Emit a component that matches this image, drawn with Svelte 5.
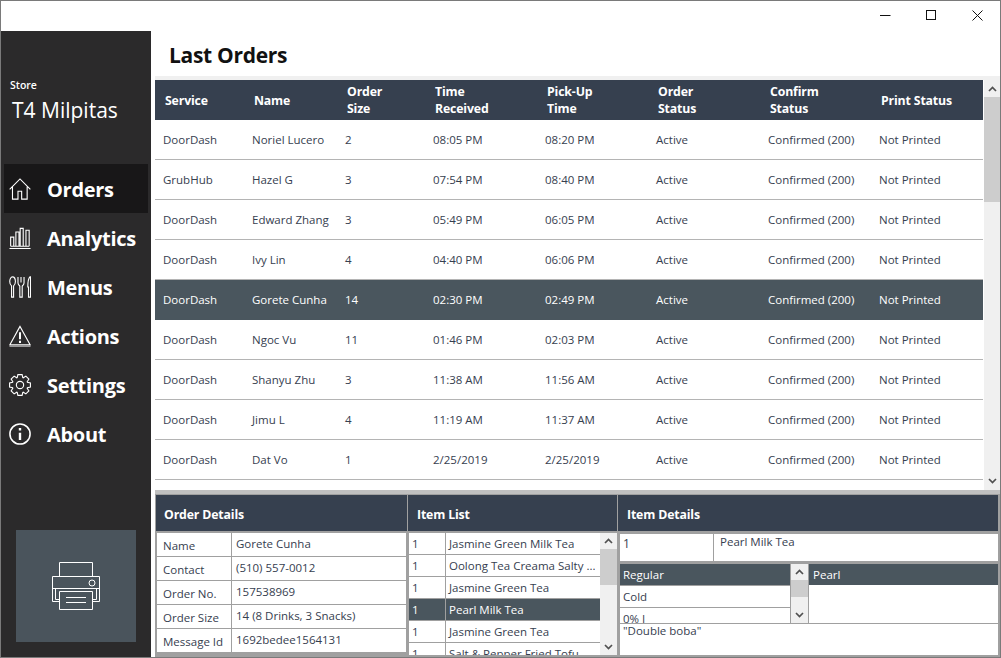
<script lang="ts">
	const columns = ['Service', 'Name', 'Order Size', 'Time Received', 'Pick-Up Time', 'Order Status', 'Confirm Status', 'Print Status'];

	const orders = [
		['DoorDash', 'Noriel Lucero', '2', '08:05 PM', '08:20 PM'],
		['GrubHub', 'Hazel G', '3', '07:54 PM', '08:40 PM'],
		['DoorDash', 'Edward Zhang', '3', '05:49 PM', '06:05 PM'],
		['DoorDash', 'Ivy Lin', '4', '04:40 PM', '06:06 PM'],
		['DoorDash', 'Gorete Cunha', '14', '02:30 PM', '02:49 PM'],
		['DoorDash', 'Ngoc Vu', '11', '01:46 PM', '02:03 PM'],
		['DoorDash', 'Shanyu Zhu', '3', '11:38 AM', '11:56 AM'],
		['DoorDash', 'Jimu L', '4', '11:19 AM', '11:37 AM'],
		['DoorDash', 'Dat Vo', '1', '2/25/2019', '2/25/2019']
	];
	const selectedOrder = 4;

	const nav = ['Orders', 'Analytics', 'Menus', 'Actions', 'Settings', 'About'];

	const details = [
		['Name', 'Gorete Cunha'],
		['Contact', '(510) 557-0012'],
		['Order No.', '157538969'],
		['Order Size', '14 (8 Drinks, 3 Snacks)'],
		['Message Id', '1692bedee1564131']
	];

	const items = ['Jasmine Green Milk Tea', 'Oolong Tea Creama Salty ...', 'Jasmine Green Tea', 'Pearl Milk Tea', 'Jasmine Green Tea', 'Salt & Pepper Fried Tofu'];
	const selectedItem = 3;

	// 8 tooth gear outline for the settings icon
	function gearPath() {
		const pts: string[] = [];
		for (let i = 0; i < 8; i++) {
			const a = (i * Math.PI) / 4;
			for (const [off, r] of [[-0.36, 8.6], [-0.2, 11.6], [0.2, 11.6], [0.36, 8.6]]) {
				pts.push(`${(12 + r * Math.sin(a + off)).toFixed(2)} ${(12 - r * Math.cos(a + off)).toFixed(2)}`);
			}
		}
		return 'M' + pts.join('L') + 'Z';
	}
</script>

{#snippet chevron(up: boolean)}
	<svg class="chev" width="9" height="6" viewBox="0 0 9 6">
		<path d={up ? 'M1 5l3.5-3.5L8 5' : 'M1 1l3.5 3.5L8 1'} fill="none" stroke="#505050" stroke-width="1.7" />
	</svg>
{/snippet}

<div class="window">
	<header class="titlebar">
		<svg width="11" height="11" viewBox="0 0 11 11" class="cap min"><path d="M0 5.5h10.5" stroke="#111" fill="none" /></svg>
		<svg width="11" height="11" viewBox="0 0 11 11" class="cap"><rect x="0.5" y="0.5" width="9" height="9" stroke="#111" fill="none" /></svg>
		<svg width="11" height="11" viewBox="0 0 11 11" class="cap"><path d="M0.5 0.5l10 10M10.5 0.5l-10 10" stroke="#111" fill="none" /></svg>
	</header>

	<div class="body">
		<aside class="sidebar">
			<div class="store-label">Store</div>
			<div class="store-name">T4 Milpitas</div>

			<nav>
				{#each nav as name, i}
					<div class="nav-item" class:active={i === 0}>
						<svg class="nav-icon" width="24" height="24" viewBox="0 0 24 24" fill="none" stroke="#fff" stroke-width="1.2">
							{#if name === 'Orders'}
								<path d="M0.7 12.500L12 1l11.300 11.500M3.800 9.500v13.500h6v-8.500h4v8.500h6V9.500" />
							{:else if name === 'Analytics'}
								<path d="M1.800 21V11h3.400v10M7.500 21V5.500h3.400V21M12.200 21V1.500h3.300V21M18.500 21V3.500h3.500V21M1.800 21h20.200" />
								<path d="M0.500 23.500h23" stroke-width="1.300" />
							{:else if name === 'Menus'}
								<path d="M3.800 1c-2 0-3 2.700-3 5s1 4 2 4.800v12.200h2.200V10.800c1-.8 2-2.500 2-4.800s-1-5-3.200-5z" />
								<path d="M9.800 1v6.500c0 1.800 1.200 2.800 2 3.500v12h2.600V11c.8-.7 2-1.700 2-3.500V1M13.100 1v6" />
								<path d="M23 .8c-1.700 1.500-2.500 5-2.500 11.200h.8v11H23.500V.8z" />
							{:else if name === 'Actions'}
								<path d="M12 1.500L1 21.500h22z" />
								<path d="M0.500 23h23" stroke="#bbb" stroke-width="1.500" />
								<path d="M12 8v7.500M12 17.300v2.200" stroke-width="2.200" />
							{:else if name === 'Settings'}
								<path d={gearPath()} />
								<circle cx="12" cy="12" r="4" />
							{:else}
								<circle cx="12" cy="12" r="11" stroke-width="1.700" />
								<path d="M12 5.500v2.800M12 10.500v8" stroke-width="2.600" />
							{/if}
						</svg>
						<span>{name}</span>
					</div>
				{/each}
			</nav>

			<button class="print" aria-label="Print">
				<svg width="48" height="48" viewBox="0 0 48 48" fill="none" stroke="#fff" stroke-width="1">
					<path d="M7.500 14.500V.5h33v14" />
					<path d="M7.500 39.500H.5v-25h47v25h-7" />
					<path d="M.5 26.500h47" />
					<circle cx="40" cy="21" r="3" />
					<path d="M3.500 27v10.500h4M44.500 27v10.500h-4" />
					<path d="M7.500 29.500h33v18h-33z" />
					<path d="M14 35.500h20M14 40.500h20" />
				</svg>
			</button>
		</aside>

		<main class="main">
			<h1>Last Orders</h1>

			<section class="orders">
				<div class="table">
					<div class="row head">
						{#each columns as col}
							<div class="cell">{col}</div>
						{/each}
					</div>
					{#each orders as order, i}
						<div class="row" class:selected={i === selectedOrder}>
							{#each order as value}
								<div class="cell">{value}</div>
							{/each}
							<div class="cell">Active</div>
							<div class="cell">Confirmed (200)</div>
							<div class="cell">Not Printed</div>
						</div>
					{/each}
				</div>
				<div class="scrollbar">
					{@render chevron(true)}
					<div class="track"><div class="thumb"></div></div>
					{@render chevron(false)}
				</div>
			</section>

			<section class="panels">
				<div class="panel">
					<h2 class="first">Order Details</h2>
					<div class="details">
						{#each details as [label, value]}
							<div class="label">{label}</div>
							<div class="value">{value}</div>
						{/each}
					</div>
				</div>

				<div class="panel">
					<h2>Item List</h2>
					<div class="item-wrap">
						<div class="items">
							{#each items as item, i}
								<div class="item" class:selected={i === selectedItem}>
									<div class="qty">1</div>
									<div class="item-name">{item}</div>
								</div>
							{/each}
						</div>
						<div class="scrollbar small">
							{@render chevron(true)}
							<div class="track"><div class="thumb"></div></div>
							{@render chevron(false)}
						</div>
					</div>
				</div>

				<div class="panel last">
					<h2>Item Details</h2>
					<div class="item-detail">
						<div class="detail-top">
							<div class="detail-qty">1</div>
							<div class="detail-name">Pearl Milk Tea</div>
						</div>
						<div class="options">
							<div class="opt-list">
								<div class="opt selected">Regular</div>
								<div class="opt">Cold</div>
								<div class="opt">0% I</div>
							</div>
							<div class="scrollbar tiny">
								{@render chevron(true)}
								<div class="track"><div class="thumb"></div></div>
								{@render chevron(false)}
							</div>
							<div class="toppings">
								<div class="opt selected">Pearl</div>
							</div>
						</div>
						<div class="note">"Double boba"</div>
					</div>
				</div>
			</section>
		</main>
	</div>
</div>

<style>
	:global(body) {
		margin: 0;
	}

	.window {
		width: 1001px;
		height: 658px;
		box-sizing: border-box;
		border: 1px solid #7a7a7a;
		background: #fff;
		display: flex;
		flex-direction: column;
		overflow: hidden;
		font-family: 'Open Sans', 'Noto Sans', sans-serif;
		font-size: 11.5px;
		color: #36404f;
	}

	.titlebar {
		height: 30px;
		flex: none;
		display: flex;
		justify-content: flex-end;
		align-items: flex-start;
		gap: 35px;
		padding: 9px 17px 0 0;
		box-sizing: border-box;
	}

	.cap {
		display: block;
	}

	.body {
		flex: 1;
		display: flex;
		min-height: 0;
	}

	.sidebar {
		width: 150px;
		flex: none;
		background: #2b2a2b;
		color: #fff;
		display: flex;
		flex-direction: column;
		box-sizing: border-box;
		padding-top: 47px;
	}

	.store-label {
		font-size: 10.5px;
		font-weight: 600;
		padding-left: 9px;
		line-height: 14px;
	}

	.store-name {
		font-size: 21px;
		padding-left: 11px;
		line-height: 28px;
		margin-top: 4px;
		letter-spacing: 0;
	}

	nav {
		margin-top: 40px;
		display: flex;
		flex-direction: column;
	}

	.nav-item {
		margin: 0 3px;
		height: 49px;
		display: flex;
		align-items: center;
		padding: 1px 0 0 5px;
		font-size: 20px;
		font-weight: 700;
		letter-spacing: -0.3px;
		box-sizing: border-box;
	}

	.nav-item.active {
		background: #181718;
	}

	.nav-icon {
		flex: none;
		width: 22px;
		height: 22px;
		margin-right: 16px;
	}

	.print {
		margin: auto 15px 15px;
		height: 112px;
		background: #4a545c;
		border: 0;
		padding: 0;
		display: flex;
		align-items: center;
		justify-content: center;
	}

	.main {
		flex: 1;
		min-width: 0;
		display: flex;
		flex-direction: column;
		padding-left: 4px;
	}

	h1 {
		margin: 0;
		height: 45px;
		flex: none;
		padding-left: 14px;
		font-size: 21px;
		font-weight: 700;
		line-height: 48px;
		color: #111;
		letter-spacing: -0.3px;
		border-bottom: 4px solid #f0f0f0;
	}

	.orders {
		height: 410px;
		flex: none;
		display: flex;
		overflow: hidden;
	}

	.table {
		width: 828px;
		flex: none;
	}

	.row {
		display: grid;
		grid-template-columns: 89px 93px 88px 112px 111px 112px 111px 112px;
		height: 40px;
		box-sizing: border-box;
		border-bottom: 1px solid #b4b4b4;
		align-items: center;
	}

	.row .cell {
		padding-left: 8px;
	}

	.row.selected {
		background: #4a565e;
		color: #fff;
		border-bottom-color: #4a565e;
	}

	.row.head {
		background: #36404f;
		color: #fff;
		font-weight: 700;
		font-size: 12.3px;
		line-height: 17px;
		border: 0;
		letter-spacing: -0.15px;
	}

	.row.head .cell {
		padding-left: 10px;
		padding-right: 40px;
	}

	.row.head .cell:last-child {
		padding-right: 0;
	}

	.scrollbar {
		flex: 1;
		background: #f0f0f0;
		display: flex;
		flex-direction: column;
		align-items: center;
		justify-content: space-between;
		padding: 6px 0;
		box-sizing: border-box;
		margin-left: 1px;
	}

	.chev {
		flex: none;
		display: block;
	}

	.track {
		flex: 1;
		width: 100%;
		margin: 5px 0;
	}

	.thumb {
		height: 105px;
		background: #cdcdcd;
	}

	.panels {
		flex: 1;
		min-height: 0;
		display: grid;
		grid-template-columns: 252px 210px 1fr;
		background: #a0a0a0;
		border-top: 4px solid #c0c0c0;
		padding: 1px 2px 2px 1px;
		box-sizing: border-box;
	}

	.panel {
		display: flex;
		flex-direction: column;
		min-width: 0;
		min-height: 0;
		border-right: 1px solid #a0a0a0;
	}

	.panel.last {
		border: 0;
	}

	h2 {
		margin: 0;
		height: 36px;
		flex: none;
		background: #36404f;
		color: #fff;
		font-size: 12.3px;
		font-weight: 700;
		line-height: 39px;
		padding-left: 9px;
		letter-spacing: -0.15px;
	}

	h2.first {
		padding-left: 8px;
	}

	.details {
		flex: 1;
		display: grid;
		grid-template-columns: 74px 1fr;
		grid-auto-rows: 23px;
		gap: 1px;
		padding: 2px 1px 0;
		min-height: 0;
		background: #a0a0a0;
	}

	.label {
		background: #fff;
		padding-left: 6px;
		line-height: 26px;
		font-weight: 500;
		overflow: hidden;
	}

	.value {
		background: #fff;
		padding-left: 4px;
		line-height: 22px;
		overflow: hidden;
	}

	.item-wrap {
		flex: 1;
		display: flex;
		min-height: 0;
		padding: 2px 1px 0;
		background: #a0a0a0;
	}

	.items {
		width: 191px;
		flex: none;
		overflow: hidden;
		background: #a0a0a0;
		display: flex;
		flex-direction: column;
		gap: 1px;
	}

	.item {
		flex: none;
		height: 21px;
		background: #fff;
		display: flex;
		line-height: 21px;
		white-space: nowrap;
	}

	.item.selected {
		background: #4a565e;
		color: #fff;
	}

	.qty {
		width: 37px;
		flex: none;
		padding-left: 3px;
		box-sizing: border-box;
		border-right: 1px solid #a0a0a0;
	}

	.item-name {
		padding-left: 3px;
		overflow: hidden;
	}

	.scrollbar.small {
		width: 17px;
		flex: none;
		margin: 0;
		padding: 5px 0;
	}

	.scrollbar.small .thumb {
		height: 36px;
	}

	.item-detail {
		flex: 1;
		display: flex;
		flex-direction: column;
		min-height: 0;
		padding: 3px 0 0 2px;
		background: #a0a0a0;
	}

	.detail-top {
		height: 27px;
		flex: none;
		background: #fff;
		display: flex;
	}

	.detail-qty {
		width: 94px;
		flex: none;
		border-right: 1px solid #a0a0a0;
		padding-left: 3px;
		box-sizing: border-box;
		font-size: 12px;
		line-height: 20px;
	}

	.detail-name {
		padding-left: 6px;
		line-height: 16px;
	}

	.options {
		height: 59px;
		flex: none;
		margin-top: 3px;
		display: flex;
		overflow: hidden;
		background: #fff;
	}

	.opt-list {
		width: 170px;
		flex: none;
		background: #a0a0a0;
		display: flex;
		flex-direction: column;
		gap: 1px;
	}

	.opt {
		flex: none;
		height: 21px;
		background: #fff;
		line-height: 22px;
		padding-left: 3px;
	}

	.toppings .opt {
		padding-left: 4px;
	}

	.opt.selected {
		background: #4a565e;
		color: #fff;
	}

	.scrollbar.tiny {
		width: 17px;
		flex: none;
		margin: 0;
		padding: 5px 0;
		border-left: 1px solid #a0a0a0;
		border-right: 1px solid #a0a0a0;
		box-sizing: content-box;
		height: 49px;
	}

	.scrollbar.tiny .thumb {
		height: 17px;
	}

	.toppings {
		flex: 1;
	}

	.note {
		flex: 1;
		background: #fff;
		border-top: 1px solid #a0a0a0;
		padding-left: 3px;
		line-height: 13px;
		overflow: hidden;
	}
</style>
